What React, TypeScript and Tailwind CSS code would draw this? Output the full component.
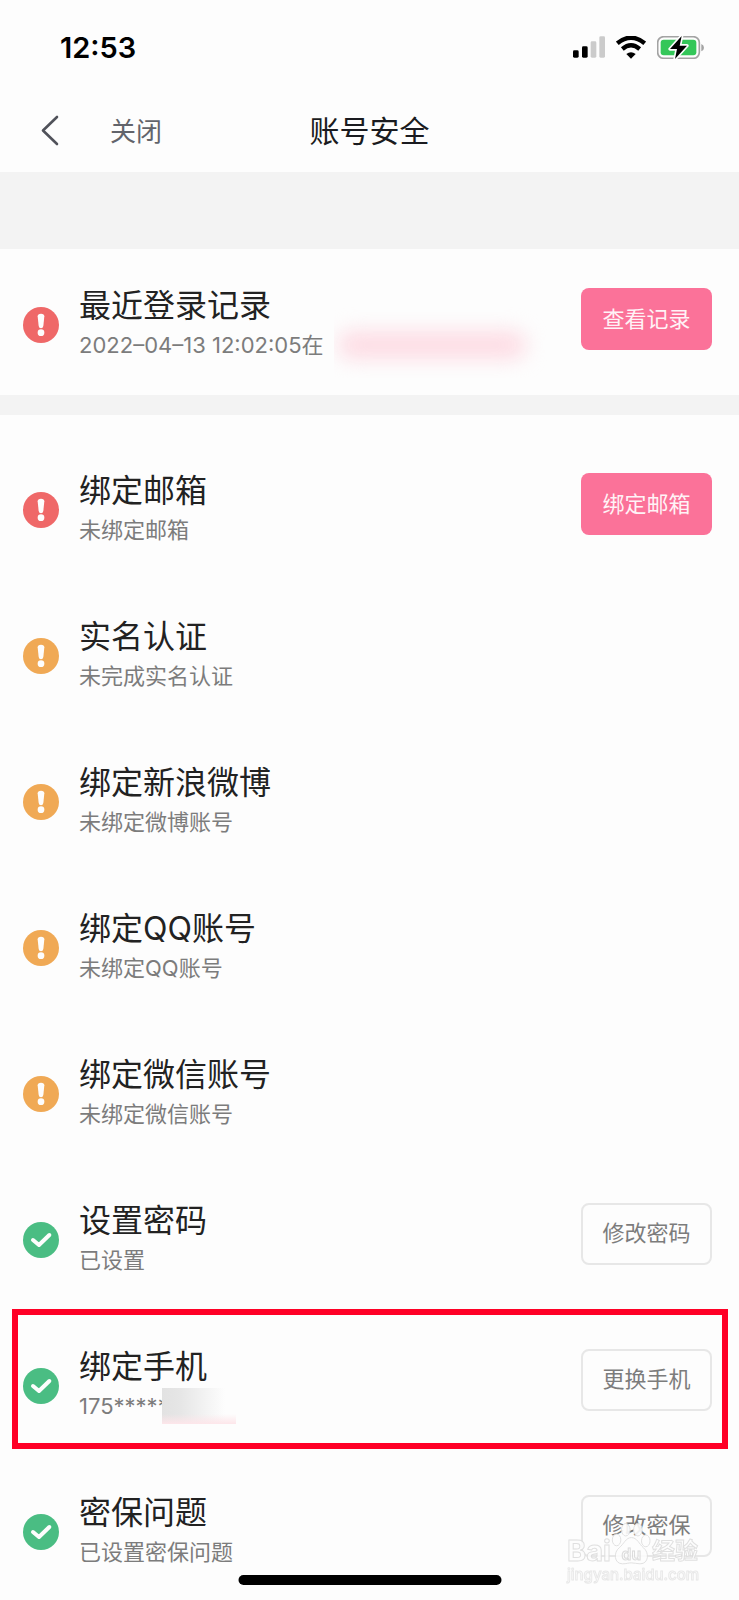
import React from "react";

type Level = "danger" | "warning" | "ok";

interface Item {
  level: Level;
  title: string;
  detail: React.ReactNode;
  action?: string;
  primary?: boolean;
  highlighted?: boolean;
}

const BADGE_FILL: Record<Level, string> = {
  danger: "#ef6868",
  warning: "#f0a955",
  ok: "#4abd83",
};

const RECENT: Item = {
  level: "danger",
  title: "最近登录记录",
  detail: (
    <>
      <span>2022–04–13 12:02:05在</span>
      <span className="absolute left-[255px] -top-6 h-[73px] w-[220px] overflow-hidden" aria-hidden="true">
        <span className="absolute left-1 top-[26px] h-7 w-[188px] rounded-full bg-[#fddce4] blur-[10px]" />
      </span>
    </>
  ),
  action: "查看记录",
  primary: true,
};

const ITEMS: Item[] = [
  { level: "danger", title: "绑定邮箱", detail: "未绑定邮箱", action: "绑定邮箱", primary: true },
  { level: "warning", title: "实名认证", detail: "未完成实名认证" },
  { level: "warning", title: "绑定新浪微博", detail: "未绑定微博账号" },
  { level: "warning", title: "绑定QQ账号", detail: "未绑定QQ账号" },
  { level: "warning", title: "绑定微信账号", detail: "未绑定微信账号" },
  { level: "ok", title: "设置密码", detail: "已设置", action: "修改密码" },
  {
    level: "ok",
    title: "绑定手机",
    detail: (
      <>
        <span>175*****</span>
        <span
          className="absolute left-[83px] -top-[2px] h-9 w-[74px] bg-[#fdfdfd] bg-[linear-gradient(to_top,#fde6ea_0,#fde6ea00_10px),linear-gradient(to_right,#e2e2e2_0,#e6e6e6_25%,#fdfdfd_85%)]"
          aria-hidden="true"
        />
      </>
    ),
    action: "更换手机",
    highlighted: true,
  },
  { level: "ok", title: "密保问题", detail: "已设置密保问题", action: "修改密保" },
];

function Badge({ level }: { level: Level }) {
  return (
    <svg className="mt-[22px] size-9 shrink-0" viewBox="0 0 108 108" aria-hidden="true">
      <circle cx="54" cy="54" r="54" fill={BADGE_FILL[level]} />
      {level === "ok" ? (
        <path d="M30 54 L48 69 L79 39" fill="none" stroke="#fdfdfd" strokeWidth="12" strokeLinecap="round" strokeLinejoin="round" />
      ) : (
        <>
          <path d="M44 28 Q44 20 54 20 Q64 20 64 28 L61 57 Q60 64 54 64 Q48 64 47 57 Z" fill="#fdfdfd" />
          <circle cx="54" cy="77" r="10" fill="#fdfdfd" />
        </>
      )}
    </svg>
  );
}

function Row({ item }: { item: Item }) {
  return (
    <li className="relative flex items-start pt-9 pr-[27px] pb-[34px] pl-[23px]">
      <Badge level={item.level} />
      <div className="ml-5 min-w-0 flex-1">
        <h2 className="mb-[2px] text-[32px] leading-[42px] text-[#222]">{item.title}</h2>
        <p className="relative text-[22px] leading-8 text-[#7c7c7c]">{item.detail}</p>
      </div>
      {item.action && (
        <button
          type="button"
          className={
            item.primary
              ? "mt-[3px] h-[62px] w-[131px] shrink-0 rounded-lg bg-[#fb7299] text-[22px] text-[#fff3f6]"
              : "mt-[3px] h-[62px] w-[131px] shrink-0 rounded-lg border-2 border-[#e7e7e7] pb-px text-[22px] text-[#7c7c7c]"
          }
        >
          {item.action}
        </button>
      )}
      {item.highlighted && (
        <div className="pointer-events-none absolute -top-px right-[11px] bottom-[7px] left-3 border-6 border-[#ff0026]" />
      )}
    </li>
  );
}

function StatusBar() {
  return (
    <div className="flex h-[94px] items-center justify-between pr-[35px] pl-[60px]">
      <span className="text-[29px] leading-none font-semibold text-black">12:53</span>
      <div className="flex items-center gap-[11px]">
        <svg className="h-[22px] w-8" viewBox="0 0 96 66" aria-hidden="true">
          <rect x="0" y="43" width="17" height="22" rx="4" fill="#000" />
          <rect x="27" y="31" width="17" height="34" rx="4" fill="#000" />
          <rect x="53" y="16" width="17" height="49" rx="4" fill="#cbcbcb" />
          <rect x="79" y="1" width="17" height="64" rx="4" fill="#cbcbcb" />
        </svg>
        <svg className="h-[23px] w-[30px]" viewBox="0 0 90 69" aria-hidden="true">
          <path d="M4 22 Q45 -12 86 22" fill="none" stroke="#000" strokeWidth="13" />
          <path d="M19 39 Q45 17 71 39" fill="none" stroke="#000" strokeWidth="13" />
          <path d="M31 54 Q45 43 59 54 L45 68 Z" fill="#000" />
        </svg>
        <svg className="h-[23px] w-[47px]" viewBox="0 0 141 69" aria-hidden="true">
          <rect x="2" y="2" width="125" height="65" rx="18" fill="none" stroke="#a3a3a3" strokeWidth="5" />
          <rect x="11" y="11" width="107" height="47" rx="9" fill="#34c759" />
          <path d="M133 24 Q141 27 141 35 Q141 43 133 46 Z" fill="#a3a3a3" />
          <path d="M74 0 L39 39 H60 L54 69 L90 29 H68 Z" fill="#000" stroke="#fdfdfd" strokeWidth="10" paintOrder="stroke" strokeLinejoin="round" />
        </svg>
      </div>
    </div>
  );
}

function Watermark() {
  return (
    <div className="pointer-events-none absolute right-[41px] bottom-[15px] w-[131px] text-[#fdfdfd] opacity-90 [-webkit-text-stroke:1px_#dddddd]">
      <div className="flex items-end justify-between">
        <span className="text-[29px] leading-7 font-bold">Bai</span>
        <svg className="-mx-1 h-[43px] w-10" viewBox="215 150 122 130" aria-hidden="true">
          <g fill="#fdfdfd" stroke="#dddddd" strokeWidth="3">
            <ellipse cx="232" cy="204" rx="13" ry="18" />
            <ellipse cx="260" cy="173" rx="13" ry="19" />
            <ellipse cx="297" cy="173" rx="13" ry="19" />
            <ellipse cx="321" cy="207" rx="13" ry="18" />
            <path d="M277 197 C260 197 255 216 240 228 C222 242 224 277 250 277 C262 277 268 274 277 274 C286 274 294 277 304 277 C331 277 332 242 314 228 C300 216 295 197 277 197 Z" />
          </g>
          <text x="277" y="266" textAnchor="middle" fontFamily="Inter" fontWeight="600" fontSize="48" fill="#fdfdfd" stroke="#d9d9d9" strokeWidth="3">
            du
          </text>
        </svg>
        <span className="text-[23px] leading-7 font-bold">经验</span>
      </div>
      <div className="text-center text-[15px] leading-5 font-medium opacity-70">jingyan.baidu.com</div>
    </div>
  );
}

export default function App() {
  return (
    <div className="relative min-h-screen overflow-hidden bg-[#fdfdfd] font-[Inter,'Noto_Sans_CJK_SC',sans-serif]">
      <div>
        <StatusBar />
        <header className="grid h-[78px] grid-cols-[1fr_auto_1fr] items-center pb-1">
          <div className="flex items-center pl-10">
            <button type="button" aria-label="返回">
              <svg className="h-8 w-5" viewBox="0 0 20 32" fill="none" stroke="#50525a" strokeWidth="2.6" strokeLinecap="round" strokeLinejoin="round" aria-hidden="true">
                <path d="M17 2 L3 15.5 L17 29" />
              </svg>
            </button>
            <button type="button" className="ml-[50px] text-[26px] text-[#62646b]">
              关闭
            </button>
          </div>
          <h1 className="text-[30px] text-[#1a1b20]">账号安全</h1>
        </header>
        <div className="h-[77px] bg-[#f3f3f3]" />
        <main>
          <ul>
            <Row item={RECENT} />
          </ul>
          <div className="h-5 bg-[#f3f3f3]" />
          <ul className="-mb-1 pt-[19px]">
            {ITEMS.map((item) => (
              <Row key={item.title} item={item} />
            ))}
          </ul>
        </main>
      </div>
      <Watermark />
      <div className="absolute bottom-[15px] left-1/2 h-[10px] w-[263px] -translate-x-1/2 rounded-full bg-black" />
    </div>
  );
}
